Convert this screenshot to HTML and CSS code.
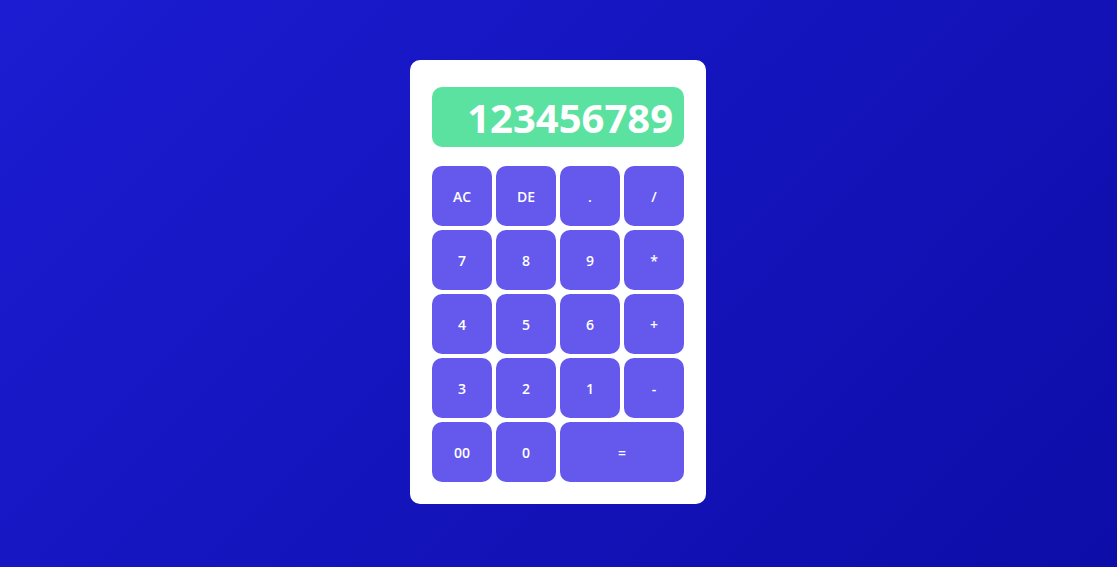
FILE: index.html
```html
<!DOCTYPE html>
<html>
<head>
<meta charset="utf-8">
<link rel="stylesheet" href="styles.css">
</head>
<body>
<div class="calc">
  <div class="display">123456789</div>
  <div class="keys">
    <button class="key">AC</button>
    <button class="key">DE</button>
    <button class="key">.</button>
    <button class="key">/</button>
    <button class="key">7</button>
    <button class="key">8</button>
    <button class="key">9</button>
    <button class="key">*</button>
    <button class="key">4</button>
    <button class="key">5</button>
    <button class="key">6</button>
    <button class="key">+</button>
    <button class="key">3</button>
    <button class="key">2</button>
    <button class="key">1</button>
    <button class="key">-</button>
    <button class="key">00</button>
    <button class="key">0</button>
    <button class="key wide">=</button>
  </div>
</div>
</body>
</html>
```
FILE: styles.css
```css
html, body {
  margin: 0;
  height: 100%;
}
body {
  font-family: "Open Sans", "Liberation Sans", sans-serif;
  background: linear-gradient(135deg, #1c1cd2 0%, #0d0da8 100%);
  display: flex;
  align-items: center;
  justify-content: center;
}
.calc {
  background: #ffffff;
  border-radius: 10px;
  padding: 27px 22px 22px 22px;
  width: 252px;
  margin-top: -3px;
  margin-right: 1px;
}
.display {
  height: 60px;
  background: #5ce2a0;
  border-radius: 10px;
  color: #ffffff;
  font-size: 40px;
  font-weight: 700;
  display: flex;
  align-items: center;
  justify-content: flex-end;
  padding-right: 11px;
  margin-bottom: 19px;
}
.keys {
  display: grid;
  grid-template-columns: repeat(4, 60px);
  grid-auto-rows: 60px;
  gap: 4px;
}
.key {
  border: none;
  margin: 0;
  padding: 0;
  background: #6558ec;
  border-radius: 10px;
  color: #ffffff;
  font-family: "Open Sans", "Liberation Sans", sans-serif;
  font-size: 14px;
  font-weight: 600;
}
.wide {
  grid-column: span 2;
}
```
